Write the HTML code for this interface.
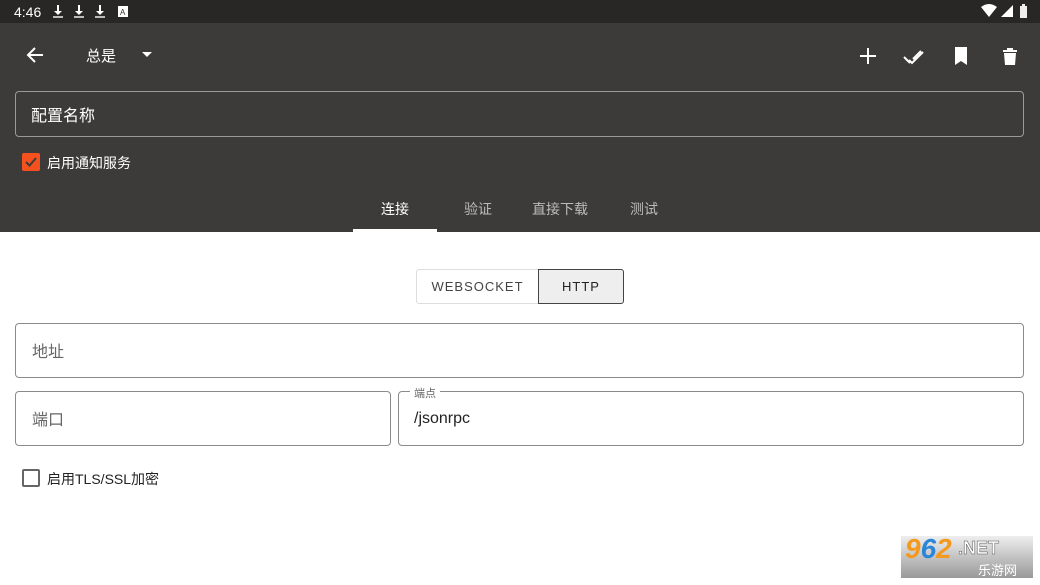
<!DOCTYPE html>
<html><head><meta charset="utf-8"><style>
*{margin:0;padding:0;box-sizing:border-box}
body{width:1040px;height:585px;overflow:hidden;background:#fff;font-family:"Liberation Sans","Noto Sans CJK SC",sans-serif;position:relative}
.abs{position:absolute}
.sb{left:0;top:0;width:1040px;height:23px;background:#282726;color:#fff}
.top{left:0;top:23px;width:1040px;height:209px;background:#3d3b39}
.field{border:1px solid #8a8a8a;border-radius:4px}
</style></head><body>
<div class="abs sb">
<div class="abs" style="left:14px;top:4px;font-size:14px;">4:46</div>
<svg class="abs" style="left:52px;top:5px" width="80" height="14"><g fill="#fff"><path d="M5 0h2v6h3l-4 4-4-4h3z"/><rect x="1" y="11" width="10" height="2" fill="#bbb"/><path d="M26 0h2v6h3l-4 4-4-4h3z"/><rect x="22" y="11" width="10" height="2" fill="#bbb"/><path d="M47 0h2v6h3l-4 4-4-4h3z"/><rect x="43" y="11" width="10" height="2" fill="#bbb"/><rect x="66" y="1" width="10" height="11"/></g><text x="68" y="10" font-size="8" fill="#333">A</text></svg>
<svg class="abs" style="left:980px;top:4px" width="50" height="15"><path d="M1 3Q9 -3 17 3L9 13z" fill="#fff"/><path d="M33 1V13H21z" fill="#fff"/><rect x="40" y="2" width="7" height="12" fill="#eee"/><rect x="42" y="0" width="3" height="2" fill="#eee"/></svg>
</div>
<div class="abs top">
<svg class="abs" style="left:26px;top:23px" width="20" height="18"><path d="M17 9H3M9 2L2 9l7 7" stroke="#fff" stroke-width="2" fill="none"/></svg>
<div class="abs" style="left:86px;top:22px;color:#fff;font-size:15px">总是</div>
<svg class="abs" style="left:142px;top:29px" width="12" height="6"><path d="M0 0h10L5 5z" fill="#fff"/></svg>
<svg class="abs" style="left:858px;top:22px" width="162" height="22"><g stroke="#fff" stroke-width="2" fill="none"><path d="M10 3v16M2 11h16"/><path d="M51 15l3 3 11-11M46 12l6 6M55 14l8-8"/></g><path d="M97 2h12v18l-6-4-6 4z" fill="#fff"/><path d="M145 5h14v2h-14zM149 3h6v2h-6zM146 8h12l-1 12h-10z" fill="#fff"/></svg>
<div class="abs field" style="left:15px;top:68px;width:1009px;height:46px;border-color:#9a9a9a"></div>
<div class="abs" style="left:31px;top:79px;color:#fff;font-size:16px">配置名称</div>
<div class="abs" style="left:22px;top:130px;width:18px;height:18px;background:#f4511e;border-radius:2px"></div>
<svg class="abs" style="left:24px;top:132px" width="14" height="14"><path d="M2 7l3.5 3.5L12 3" stroke="#3d3b39" stroke-width="2" fill="none"/></svg>
<div class="abs" style="left:47px;top:130px;color:#fff;font-size:14px">启用通知服务</div>
<div class="abs" style="left:381px;top:176px;color:#fff;font-size:14px">连接</div>
<div class="abs" style="left:464px;top:176px;color:#bbb;font-size:14px">验证</div>
<div class="abs" style="left:532px;top:176px;color:#bbb;font-size:14px">直接下载</div>
<div class="abs" style="left:630px;top:176px;color:#bbb;font-size:14px">测试</div>
<div class="abs" style="left:353px;top:206px;width:84px;height:3px;background:#fff"></div>
</div>
<div class="abs" style="left:416px;top:269px;width:123px;height:35px;border:1px solid #ddd;border-radius:3px 0 0 3px;font-size:13px;letter-spacing:1px;color:#444;text-align:center;line-height:33px">WEBSOCKET</div>
<div class="abs" style="left:538px;top:269px;width:86px;height:35px;border:1px solid #444;background:#eee;border-radius:0 3px 3px 0;font-size:13px;letter-spacing:1px;color:#222;text-align:center;line-height:33px">HTTP</div>
<div class="abs field" style="left:15px;top:323px;width:1009px;height:55px"></div>
<div class="abs" style="left:32px;top:338px;color:#666;font-size:16px">地址</div>
<div class="abs field" style="left:15px;top:391px;width:376px;height:55px"></div>
<div class="abs" style="left:32px;top:406px;color:#666;font-size:16px">端口</div>
<div class="abs field" style="left:398px;top:391px;width:626px;height:55px"></div>
<div class="abs" style="left:410px;top:385px;background:#fff;padding:0 4px;color:#666;font-size:11px">端点</div>
<div class="abs" style="left:414px;top:410px;color:#222;font-size:16px">/jsonrpc</div>
<div class="abs" style="left:22px;top:469px;width:18px;height:18px;border:2px solid #666;border-radius:2px"></div>
<div class="abs" style="left:47px;top:469px;color:#222;font-size:14px">启用TLS/SSL加密</div>
<div class="abs" style="left:901px;top:536px;width:132px;height:42px;background:linear-gradient(#eee,#999)"></div>
<div class="abs" style="left:905px;top:533px;font:italic bold 28px 'Liberation Sans';color:#f39a1e">9<span style="color:#2a86d8">6</span>2</div>
<div class="abs" style="left:958px;top:538px;font:bold 18px 'Liberation Sans';color:#fff;-webkit-text-stroke:0.5px #555">.NET</div>
<div class="abs" style="left:978px;top:560px;font-size:13px;color:#fff">乐游网</div>
</body></html>
